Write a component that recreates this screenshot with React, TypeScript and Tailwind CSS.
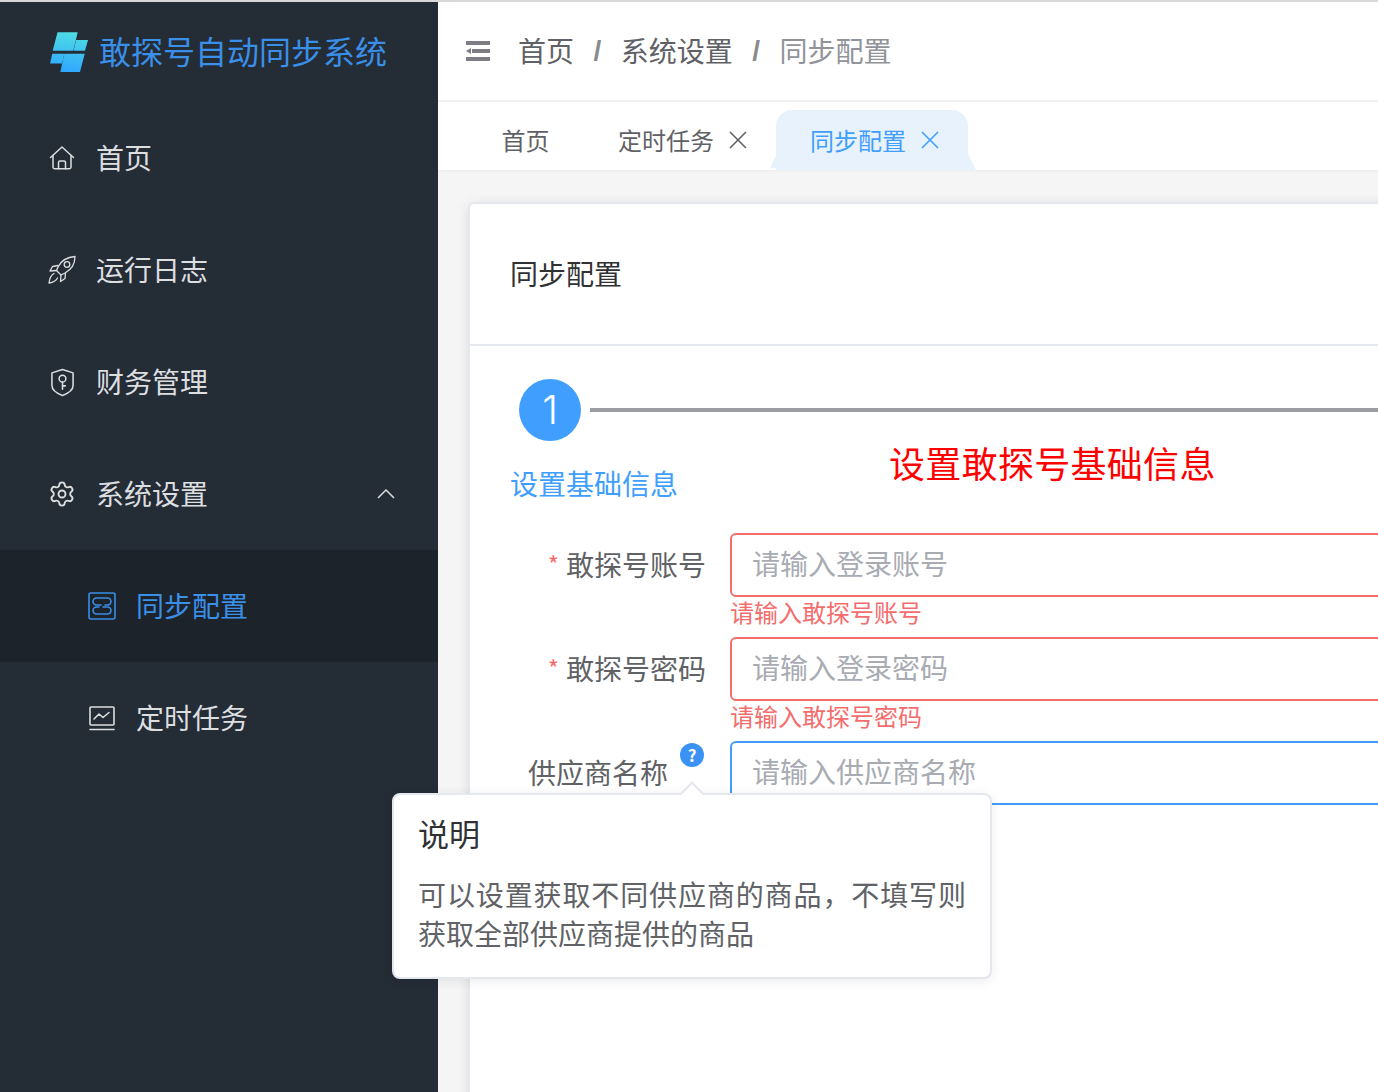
import { Settings } from "lucide-react";
import type { ReactNode } from "react";

const HomeIcon = () => (
  <svg viewBox="0 0 26 26" className="w-[26px] h-[26px]" fill="none" stroke="currentColor" strokeWidth="1.5" strokeLinejoin="round" strokeLinecap="round">
    <path d="M1.5 12.5 13 2l11.5 10.5" />
    <path d="M4 10.5V22a1.8 1.8 0 0 0 1.8 1.8h14.4A1.8 1.8 0 0 0 22 22V10.5" />
    <path d="M9.5 23.8V17.5a1.5 1.5 0 0 1 1.5-1.5h4a1.5 1.5 0 0 1 1.5 1.5v6.3" />
  </svg>
);

const RocketIcon = () => (
  <svg viewBox="0 0 30 30" className="w-[30px] h-[30px]" fill="none" stroke="currentColor" strokeWidth="1.3" strokeLinejoin="round" strokeLinecap="round">
    <path d="M28 1.500C20.500 2 14.500 5 11 12l-1.500 3.500 4.500 4.500 4-2C24.500 14.500 28 9 28 1.500z" />
    <circle cx="20" cy="9.500" r="2.800" />
    <path d="M11 10.500 5.500 11.500 3 16l6.500-.5" />
    <path d="M18.500 18l-.5 5.500-4.500 3 .5-6.500" />
    <path d="M7 18.500C4 20 2.500 24 2 28c3.500-.5 7-2 8.500-5" />
  </svg>
);

const ShieldIcon = () => (
  <svg viewBox="0 0 26 30" className="w-[25px] h-[29px]" fill="none" stroke="currentColor" strokeWidth="1.6" strokeLinejoin="round" strokeLinecap="round">
    <path d="M13 1.500 24 5v13c0 4.500-6 8.500-11 10.500C8 26.500 2 22.500 2 18V5z" />
    <circle cx="13" cy="11" r="3.500" />
    <path d="M13 14.500V22M13 18.500h3" />
  </svg>
);

const SyncBoxIcon = () => (
  <svg viewBox="0 0 28 28" className="w-[28px] h-[28px]" fill="none" stroke="currentColor" strokeWidth="1.6" strokeLinejoin="round" strokeLinecap="round">
    <rect x="1" y="1" width="26" height="26" rx="2" />
    <path d="M13 13H8.500a3.500 3.500 0 0 1 0-7h11a3.500 3.500 0 0 1 0 7H17" />
    <path d="M15 15h4.500a3.500 3.500 0 0 1 0 7h-11a3.500 3.500 0 0 1 0-7H11" />
  </svg>
);

const ChartIcon = () => (
  <svg viewBox="0 0 26 26" className="w-[26px] h-[26px]" fill="none" stroke="currentColor" strokeWidth="1.6" strokeLinejoin="round" strokeLinecap="round">
    <rect x="1" y="2" width="24" height="18" rx="1" />
    <path d="M5 14l5-5 4 3.500 6-5" />
    <path d="M1 24.500h24" />
  </svg>
);

const CloseIcon = ({ className }: { className: string }) => (
  <svg viewBox="0 0 18 18" className={className} fill="none" stroke="currentColor" strokeWidth="1.6">
    <path d="M1 1l16 16M17 1 1 17" />
  </svg>
);

const Logo = () => (
  <svg viewBox="0 0 38 40" className="w-[38px] h-[40px] shrink-0">
    <defs>
      <linearGradient id="logoFill" gradientUnits="userSpaceOnUse" x1="22" y1="0" x2="16" y2="40">
        <stop offset="0" stopColor="#4fdde3" />
        <stop offset="1" stopColor="#2ea6ff" />
      </linearGradient>
    </defs>
    <g fill="url(#logoFill)">
      <polygon points="7.500,0.300 27.700,0.300 23.300,18.700 2.700,18.700" />
      <polygon points="26,8 38,8 35,18.700 23.700,18.700" />
      <polygon points="2.300,21.700 14.300,21.700 12,31.500 0,31.500" />
      <polygon points="14.300,21.700 34.700,21.700 30,40 10.300,40" />
    </g>
  </svg>
);

interface NavProps {
  icon: ReactNode;
  label: string;
  chevron?: boolean;
}

const navList: NavProps[] = [
  { icon: <HomeIcon />, label: "首页" },
  { icon: <RocketIcon />, label: "运行日志" },
  { icon: <ShieldIcon />, label: "财务管理" },
  { icon: <Settings size={28} strokeWidth={1.6} />, label: "系统设置", chevron: true },
];

const Sidebar = () => (
  <aside className="w-[438px] shrink-0 bg-[#242c36] flex flex-col">
    <div className="h-[100px] flex items-start pt-[30px] pl-[50px] gap-[11px]">
      <Logo />
      <span className="-mt-[4px] text-[32px] leading-[44px] text-[#3a8fe8] whitespace-nowrap">敢探号自动同步系统</span>
    </div>
    {navList.map(({ icon, label, chevron }) => (
      <div key={label} className="h-[112px] flex items-center text-[#dcdee0]">
        <div className="w-[96px] pl-[47px] shrink-0">
          <div className="w-[30px] h-[30px] flex items-center justify-center">{icon}</div>
        </div>
        <span className="text-[28px] flex-1 -mt-[2px]">{label}</span>
        {chevron && (
          <svg viewBox="0 0 18 10" className="w-[18px] h-[10px] mr-[43px]" fill="none" stroke="currentColor" strokeWidth="1.5">
            <path d="M1 9l8-8 8 8" />
          </svg>
        )}
      </div>
    ))}
    <div className="h-[112px] flex items-center bg-[#1d232b] text-[#3a8fe8] pl-[88px] gap-[20px]">
      <SyncBoxIcon />
      <span className="text-[28px] -mt-[2px]">同步配置</span>
    </div>
    <div className="h-[112px] flex items-center text-[#dcdee0] pl-[89px] gap-[21px]">
      <ChartIcon />
      <span className="text-[28px] -mt-[2px]">定时任务</span>
    </div>
  </aside>
);

const Slash = () => (
  <span className="text-[28px] font-bold font-['Liberation_Sans'] text-[#8a8a8e] mx-[19.5px]">/</span>
);

const Breadcrumb = () => (
  <div className="h-[98px] shrink-0 flex items-center bg-white border-b-2 border-[#f0f0f0] box-content">
    <svg viewBox="0 0 24 20" className="w-[24px] h-[20px] ml-[28px] mr-[28px]" fill="#7d7d83">
      <rect x="0" y="0" width="24" height="4" />
      <rect x="6" y="8" width="18" height="4" />
      <polygon points="0,10 5,7 5,13" />
      <rect x="0" y="16" width="24" height="4" />
    </svg>
    <span className="text-[28px] text-[#5f6166] -mt-[2px]">首页</span>
    <Slash />
    <span className="text-[28px] text-[#5f6166] -mt-[2px]">系统设置</span>
    <Slash />
    <span className="text-[28px] text-[#909399] -mt-[2px]">同步配置</span>
  </div>
);

const Tabs = () => (
  <div className="h-[70px] shrink-0 flex items-end pl-[29px] bg-white border-b-2 border-[#f0f0f0]">
    <div className="h-[60px] w-[116px] pl-[1px] flex items-center justify-center text-[24px] text-[#5f6166]">首页</div>
    <div className="h-[60px] w-[193px] flex items-center pl-[35px] gap-[15px] text-[24px] text-[#5f6166]">
      定时任务
      <CloseIcon className="w-[18px] h-[18px]" />
    </div>
    <div className="relative h-[60px] w-[192px] flex items-center pl-[34px] gap-[15px] text-[24px] text-[#409eff] bg-[#e8f2fc] rounded-t-[16px]">
      同步配置
      <CloseIcon className="w-[18px] h-[18px]" />
      <svg viewBox="0 0 8 16" className="absolute left-[-6px] bottom-0 w-[6px] h-[16px]" fill="#e8f2fc">
        <polygon points="8,0 8,16 0,16" />
      </svg>
      <svg viewBox="0 0 8 16" className="absolute right-[-8px] bottom-0 w-[8px] h-[16px]" fill="#e8f2fc">
        <polygon points="0,0 8,16 0,16" />
      </svg>
    </div>
  </div>
);

interface FieldProps {
  label: string;
  placeholder: string;
  error?: string;
}

const fieldList: FieldProps[] = [
  { label: "敢探号账号", placeholder: "请输入登录账号", error: "请输入敢探号账号" },
  { label: "敢探号密码", placeholder: "请输入登录密码", error: "请输入敢探号密码" },
];

const Field = ({ label, placeholder, error }: FieldProps) => (
  <div className="flex h-[104px]">
    <label className="w-[236px] pr-[24px] pb-[2px] h-[63px] flex items-center justify-end text-[28px] text-[#606266] shrink-0">
      <span className="text-[#f56c6c] text-[24px] mr-[7px]">*</span>
      {label}
    </label>
    <div className="flex-1">
      <input
        placeholder={placeholder}
        className="w-full h-[64px] px-[20px] pb-[4px] text-[28px] rounded-[6px] border-2 border-[#f56c6c] outline-none placeholder:text-[#a8abb2]"
      />
      <div className="text-[24px] leading-[30px] text-[#f56c6c]">{error}</div>
    </div>
  </div>
);

const Popover = () => (
  <div className="absolute left-[392px] top-[793px] w-[600px] h-[186px] bg-white border-2 border-[#e4e7ed] rounded-[8px] pl-[24px] pr-[24px] pt-[16px] shadow-[0_2px_12px_rgba(0,0,0,0.08)]">
    <div className="absolute left-[289px] top-[-10px] w-[18px] h-[18px] rotate-45 bg-white border-l-2 border-t-2 border-[#e4e7ed]" />
    <div className="text-[31px] leading-[44px] text-[#303133]">说明</div>
    <p className="mt-[20px] text-[28px] leading-[39px] text-[#606266] text-justify">
      可以设置获取不同供应商的商品，不填写则获取全部供应商提供的商品
    </p>
  </div>
);

export default function App() {
  return (
    <div
      className="relative w-[1378px] h-[1092px] overflow-hidden flex flex-col bg-white"
      style={{ fontFamily: '"Noto Sans CJK SC", "Noto Sans", sans-serif' }}
    >
      <div className="h-[2px] bg-[#d8d8d8] shrink-0" />
      <div className="flex flex-1 min-h-0">
        <Sidebar />
        <main className="flex-1 min-w-0 flex flex-col overflow-hidden">
          <Breadcrumb />
          <Tabs />
          <div className="flex-1 min-h-0 bg-[#f5f5f5] pt-[30px] pl-[30px]">
            <div className="w-[1000px] h-[1000px] bg-white border-2 border-[#e4e7ed] rounded-[6px] shadow-[0_2px_12px_rgba(0,0,0,0.1)]">
              <div className="h-[142px] pl-[40px] pb-[3px] flex items-center border-b-2 border-[#e4e7ed] text-[28px] text-[#303133]">
                同步配置
              </div>
              <div className="pl-[40px] pt-[33px]">
                <div className="flex items-center pl-[9px]">
                  <div
                    className="w-[62px] h-[62px] rounded-full bg-[#409eff] text-white flex items-center justify-center text-[40px] font-light"
                    style={{ fontFamily: "Inter, sans-serif" }}
                  >
                    1
                  </div>
                  <div className="flex-1 h-[4px] bg-[#9b9da3] ml-[9px]" />
                </div>
                <div className="flex h-[92px]">
                  <div className="w-[379px] pt-[22px] text-[28px] leading-[40px] text-[#409eff]">设置基础信息</div>
                  <div className="-mt-[4px] text-[36px] leading-[50px] tracking-[0.3px] text-[#ff0000]">设置敢探号基础信息</div>
                </div>
              </div>
              <div className="pl-[24px]">
                {fieldList.map((f) => (
                  <Field key={f.label} {...f} />
                ))}
                <div className="flex h-[64px]">
                  <div className="w-[236px] shrink-0 relative h-[63px] pb-[2px] flex items-center justify-end pr-[62px] text-[28px] text-[#606266]">
                    供应商名称
                    <div className="absolute left-[186px] top-[2px] w-[24px] h-[24px] rounded-full bg-[#3a92f5] text-white text-[17px] font-bold flex items-center justify-center">
                      ?
                    </div>
                  </div>
                  <input
                    placeholder="请输入供应商名称"
                    className="flex-1 h-[64px] px-[20px] pb-[4px] text-[28px] rounded-[6px] border-2 border-[#409eff] outline-none placeholder:text-[#a8abb2]"
                  />
                </div>
              </div>
            </div>
          </div>
        </main>
      </div>
      <Popover />
    </div>
  );
}
